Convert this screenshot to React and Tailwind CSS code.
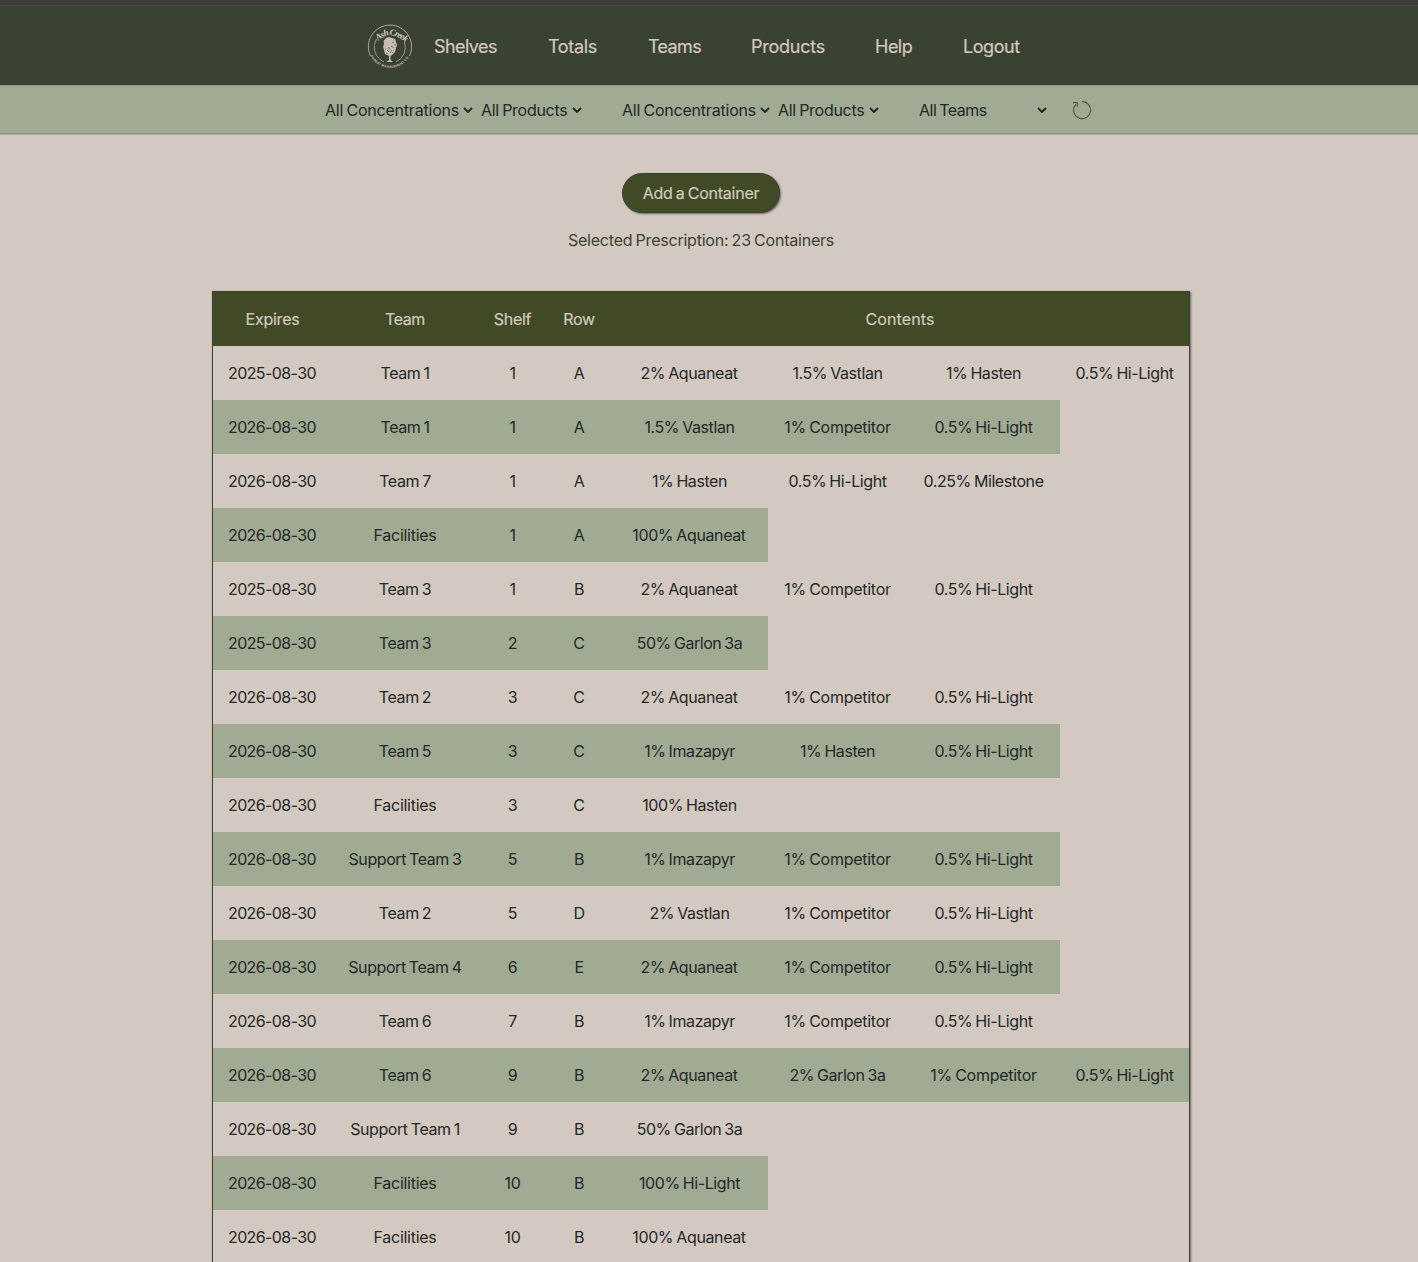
import React from "react";

const H = "0.5% Hi-Light";
const C = "1% Competitor";
const rows = [
  ["2025-08-30", "Team 1", "1", "A", "2% Aquaneat", "1.5% Vastlan", "1% Hasten", H],
  ["2026-08-30", "Team 1", "1", "A", "1.5% Vastlan", C, H],
  ["2026-08-30", "Team 7", "1", "A", "1% Hasten", H, "0.25% Milestone"],
  ["2026-08-30", "Facilities", "1", "A", "100% Aquaneat"],
  ["2025-08-30", "Team 3", "1", "B", "2% Aquaneat", C, H],
  ["2025-08-30", "Team 3", "2", "C", "50% Garlon 3a"],
  ["2026-08-30", "Team 2", "3", "C", "2% Aquaneat", C, H],
  ["2026-08-30", "Team 5", "3", "C", "1% Imazapyr", "1% Hasten", H],
  ["2026-08-30", "Facilities", "3", "C", "100% Hasten"],
  ["2026-08-30", "Support Team 3", "5", "B", "1% Imazapyr", C, H],
  ["2026-08-30", "Team 2", "5", "D", "2% Vastlan", C, H],
  ["2026-08-30", "Support Team 4", "6", "E", "2% Aquaneat", C, H],
  ["2026-08-30", "Team 6", "7", "B", "1% Imazapyr", C, H],
  ["2026-08-30", "Team 6", "9", "B", "2% Aquaneat", "2% Garlon 3a", C, H],
  ["2026-08-30", "Support Team 1", "9", "B", "50% Garlon 3a"],
  ["2026-08-30", "Facilities", "10", "B", "100% Hi-Light"],
  ["2026-08-30", "Facilities", "10", "B", "100% Aquaneat"],
];

function Logo() {
  return (
    <svg className="h-[46px] w-[46px]" viewBox="0 0 46 46" fill="none">
      <defs>
        <path id="nameArc" d="M11 17 Q23 5 38 18" />
        <path id="footArc" d="M3.5 32 A22 22 0 0 0 42.5 32" />
      </defs>
      <path d="M3.5 32 A21.6 21.6 0 1 1 42.5 32" stroke="#b9b4a4" strokeWidth="0.9" />
      <path d="M9.5 15 A16.3 16.3 0 0 0 17 38 M37.5 18 A16.3 16.3 0 0 1 29 38" stroke="#a3a390" strokeWidth="0.9" />
      <text fill="#d4c9c0" fontSize="9" fontStyle="italic" fontWeight="700" fontFamily="Liberation Serif, serif">
        <textPath href="#nameArc" textLength="31">Ash Creek</textPath>
      </text>
      <text fill="#c9c1b4" fontSize="3.2" fontWeight="700" fontFamily="Liberation Sans, sans-serif">
        <textPath href="#footArc" textLength="46">FOREST MANAGEMENT CO</textPath>
      </text>
      <path d="M19 14 L22 13 L25 14 L28 15 L29 18 L30 21 L29 24 L28 28 L25 31 L23.5 32 L23.5 36 L26 38 L19.5 38 L22 36 L22 32 L18 30 L17 26 L16 23 L17 20 L16.5 17Z" fill="#c5bdb0" />
      <path d="M25 18 l2 1 M24 22 l3 2 M20 26 l2 2 M25 26 l-2 3 M22 23 v3 M27 21 h2 M18 25 h1 M19 29 l2 1 M26 28 l-1 1" stroke="#6d705e" strokeWidth="0.9" />
    </svg>
  );
}

function Chevron({ className }) {
  return (
    <svg className={`h-[6px] w-[10px] shrink-0 ${className}`} viewBox="0 0 10 6" fill="none">
      <path d="M1 1 L5 5 L9 1" stroke="#242726" strokeWidth="1.9" />
    </svg>
  );
}

function Select({ label, className, textClass }) {
  return (
    <button className={`flex h-6 items-center whitespace-nowrap text-left [word-spacing:-1px] ${className}`}>
      <span className={textClass}>{label}</span>
      <Chevron className="ml-auto" />
    </button>
  );
}

const nav = [
  ["Shelves", "w-[114px] tracking-[-0.58px]"],
  ["Totals", "w-[100px] tracking-[-0.35px]"],
  ["Teams", "w-[103px] tracking-[-0.65px]"],
  ["Products", "w-[124px] tracking-[-0.25px]"],
  ["Help", "w-[88px] tracking-[-0.5px]"],
  ["Logout", "w-[70px] tracking-[-0.45px]"],
];

// Letter spacing by kind of cell: dates, teams, mixtures.
function track(text) {
  if (text.startsWith("202")) return "pr-px tracking-[-0.6px]";
  if (text === "Facilities") return "tracking-[-0.28px]";
  if (text === C) return "tracking-[-0.27px]";
  if (text.includes("Garlon")) return "tracking-[-0.45px]";
  if (text.includes("Aquaneat")) return "pr-px tracking-[-0.38px]";
  return "tracking-[-0.42px]";
}

export default function App() {
  return (
    <div className="h-[1262px] w-[1418px] overflow-hidden bg-[#d4c9c0] font-['Inter',sans-serif] text-base font-[440] text-[#242726]">
      <header className="h-[85px] border-t-[5px] border-[#3c3c3c] bg-[#3a4231]">
        <nav className="flex h-20 items-center border-t border-[#424641] pl-[367px] text-lg text-[#d4c9c0]">
          <div className="w-[67px] pt-0.5"><Logo /></div>
          {nav.map(([label, cls]) => (
            <a key={label} className={`pt-[3px] leading-[26px] [-webkit-text-stroke:0.2px] ${cls}`}>{label}</a>
          ))}
        </nav>
      </header>

      <div className="flex h-[49px] items-center border-t border-b border-t-[#8f958a] border-b-[#8e8e8e] bg-[#a1ab93] pl-[325px] pt-px shadow-[0_1px_1px_#b5aeaa]">
        <Select label="All Concentrations" className="w-[148px]" textClass="tracking-[-0.21px]" />
        <Select label="All Products" className="ml-2 w-[101px]" textClass="tracking-[-0.28px]" />
        <Select label="All Concentrations" className="ml-10 w-[148px]" textClass="tracking-[-0.21px]" />
        <Select label="All Products" className="ml-2 w-[101px]" textClass="tracking-[-0.28px]" />
        <Select label="All Teams" className="ml-10 w-32" textClass="tracking-[-0.5px]" />
        <svg className="ml-[25px] h-5 w-5" viewBox="0 0 20 20" fill="none" stroke="#4d5745" strokeWidth="1.1">
          <path d="M10 1.6 A8.5 8.5 0 1 1 4.1 4.1" />
          <path d="M0.8 2.6 H5.3 V7" />
        </svg>
      </div>

      <main className="flex w-[1402px] flex-col items-center pt-[39px]">
        <button className="h-10 w-[158px] rounded-full border border-[#3a4231] bg-[#404a24] tracking-[-0.25px] text-[#d4c9c0] shadow-[1px_1px_2px_#666] [-webkit-text-stroke:0.2px] [word-spacing:-1px]">
          Add a Container
        </button>
        <p className="mt-[15px] leading-6 tracking-[-0.22px] text-[#3a4231] [word-spacing:-1px]">Selected Prescription: 23 Containers</p>

        <div className="mt-[39px] h-[1100px] w-[978px] border border-[#3a4231] shadow-[1px_1px_2px_#666]">
          <table className="w-[976px] table-fixed border-collapse text-center">
            <colgroup>
              <col className="w-[119px]" />
              <col className="w-[146px]" />
              <col className="w-[69px]" />
              <col className="w-[64px]" />
              <col className="w-[157px]" />
              <col className="w-[139px]" />
              <col className="w-[153px]" />
              <col className="w-[129px]" />
            </colgroup>
            <thead>
              <tr className="h-[54px] bg-[#404a24] text-[#d4c9c0] [-webkit-text-stroke:0.2px]">
                <th className="p-0 font-[440] tracking-[-0.25px]">Expires</th>
                <th className="p-0 font-[440] tracking-[-0.4px]">Team</th>
                <th className="p-0 font-[440] tracking-[-0.3px]">Shelf</th>
                <th className="p-0 font-[440] tracking-[-0.4px]">Row</th>
                <th className="p-0 font-[440] tracking-[0.1px]" colSpan={4}>Contents</th>
              </tr>
            </thead>
            <tbody>
              {rows.map((row, i) => (
                <tr key={i} className="h-[54px] [word-spacing:-1px]">
                  {row.map((cell, j) => (
                    <td key={j} className={`whitespace-nowrap py-0 pl-0 ${track(cell)} ${i % 2 ? "bg-[#a1ab93]" : ""}`}>
                      {cell}
                    </td>
                  ))}
                </tr>
              ))}
            </tbody>
          </table>
        </div>
      </main>
    </div>
  );
}
